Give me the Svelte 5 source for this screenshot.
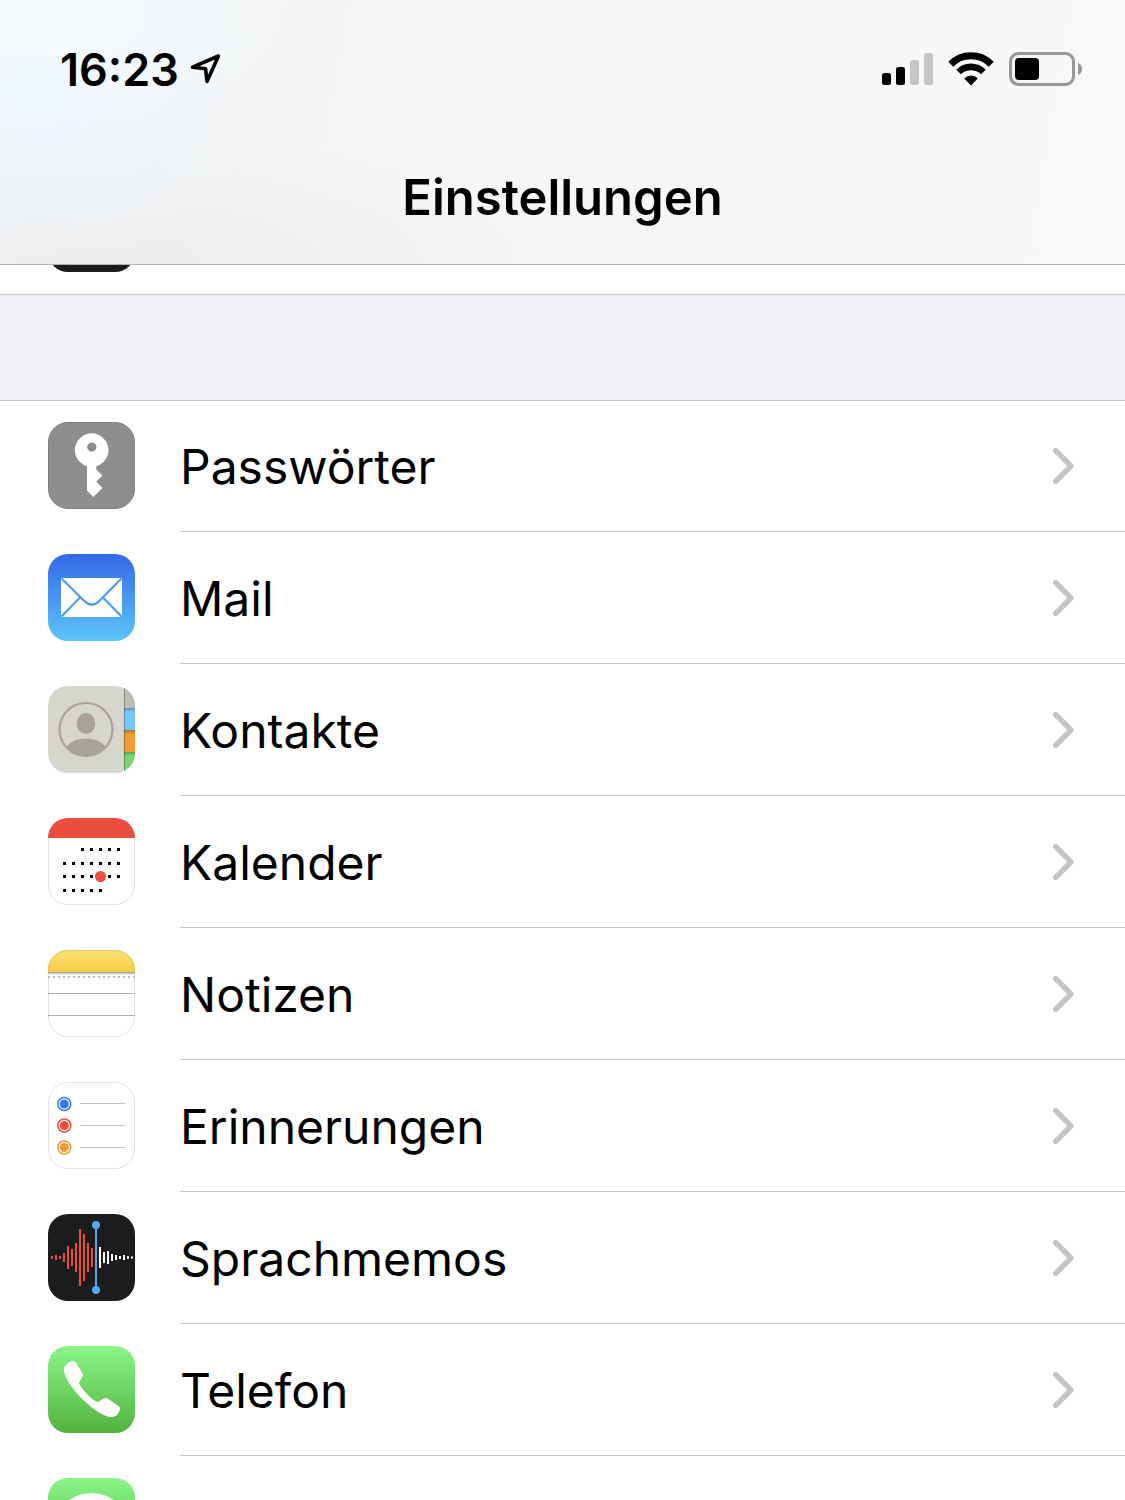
<script>
  const items = [
    { id: 'passwords', label: 'Passwörter' },
    { id: 'mail', label: 'Mail' },
    { id: 'contacts', label: 'Kontakte' },
    { id: 'calendar', label: 'Kalender' },
    { id: 'notes', label: 'Notizen' },
    { id: 'reminders', label: 'Erinnerungen' },
    { id: 'memos', label: 'Sprachmemos' },
    { id: 'phone', label: 'Telefon' },
    { id: 'messages', label: '', name: 'Nachrichten' }
  ];

  const calendarRows = [
    { y: 30, from: 2, to: 6 },
    { y: 44, from: 0, to: 6 },
    { y: 57, from: 0, to: 6 },
    { y: 71, from: 0, to: 4 }
  ];
  const calendarDots = calendarRows.flatMap((r) =>
    Array.from({ length: r.to - r.from + 1 }, (_, i) => ({ x: 15 + (r.from + i) * 9, y: r.y }))
  );

  const redBars = [1.3, 2.5, 1.5, 4.5, 11.5, 8.5, 14.5, 28.5, 23.5, 14.5, 9.5];
  const whiteBars = [10.5, 5.5, 6.5, 3.5, 2.5, 1.5, 2.5, 1.3, 1];

  const reminders = [
    { y: 22, color: '#3478f6' },
    { y: 43.5, color: '#eb4d3d' },
    { y: 65.5, color: '#f09a37' }
  ];
</script>

<div class="screen">
  <header class="header">
    <div class="status">
      <div class="clock">
        <span class="time">16:23</span>
        <svg width="32" height="32" viewBox="0 0 32 32" aria-hidden="true">
          <path d="M2.600 14.200 28.400 3 17 28.400 15.600 15.800Z" fill="none" stroke="#000" stroke-width="3.600" stroke-linejoin="round" />
        </svg>
      </div>
      <div class="indicators">
        <svg width="51" height="32" viewBox="0 0 51 32" aria-hidden="true">
          <rect x="0" y="20" width="9" height="12" rx="2.5" />
          <rect x="14" y="14" width="9" height="18" rx="2.5" />
          <rect x="28" y="7" width="9" height="25" rx="2.5" fill="#c5c5c5" />
          <rect x="42" y="0" width="9" height="32" rx="2.5" fill="#c5c5c5" />
        </svg>
        <svg width="46" height="34" viewBox="0 0 46 34" aria-hidden="true">
          <g fill="none" stroke="#000">
            <path d="M2.8 12.2A28.5 28.5 0 0 1 43.2 12.2" stroke-width="7" />
            <path d="M10.6 20A17.5 17.5 0 0 1 35.4 20" stroke-width="6.6" />
          </g>
          <path d="M16.2 26.4A9.6 9.6 0 0 1 29.8 26.4L23 33.4Z" />
        </svg>
        <svg width="73" height="34" viewBox="0 0 73 34" aria-hidden="true">
          <rect x="1.5" y="1.5" width="63" height="31" rx="8" fill="none" stroke="#979797" stroke-width="3" />
          <rect x="6" y="6" width="24" height="22" rx="4" />
          <path d="M69 11C71.6 12 73 14.300 73 17S71.600 22 69 23Z" fill="#979797" />
        </svg>
      </div>
    </div>
    <h1>Einstellungen</h1>
  </header>

  <main>
    <div class="tail">
      <svg class="icon" width="87" height="87" viewBox="0 0 87 87" aria-hidden="true">
        <rect width="87" height="87" rx="20" fill="#1c1b1d" />
      </svg>
    </div>
    <div class="spacer"></div>

    <ul class="list">
      {#each items as item (item.id)}
        <li>
          <a class="row" href={'#' + item.id} aria-label={item.name}>
            <svg class="icon" width="87" height="87" viewBox="0 0 87 87" aria-hidden="true">
              {#if item.id === 'passwords'}
                <rect x="0.5" y="0.5" width="86" height="86" rx="19.500" fill="#8e8e91" stroke="#7f7f82" />
                <path fill="#fff" fill-rule="evenodd" d="M39 44.300A16.800 16.800 0 1 1 48.300 44.300V47.600L54.500 53.600 48.300 59.500 54.500 66 45.200 75 39 68.500ZM43.800 20.400a4.600 4.600 0 1 0 .01 0Z" />
              {:else if item.id === 'mail'}
                <defs>
                  <linearGradient id="mail-fill" x1="0" y1="0" x2="0" y2="1">
                    <stop offset="0" stop-color="#3468e8" />
                    <stop offset="1" stop-color="#5cc5fa" />
                  </linearGradient>
                </defs>
                <rect width="87" height="87" rx="20" fill="url(#mail-fill)" />
                <rect x="13" y="24" width="61" height="39" rx="1" fill="#fff" />
                <g fill="none" stroke="#459bf3" stroke-width="2">
                  <path d="M13.500 24.500 36 46.800C41 51.800 46.500 51.800 51.500 46.800L73.500 24.500" />
                  <path d="M32 43.500 13.500 62.500M55 43.500 73.500 62.500" />
                </g>
              {:else if item.id === 'contacts'}
                <defs>
                  <clipPath id="contacts-shape"><rect width="87" height="87" rx="20" /></clipPath>
                  <clipPath id="contacts-disc"><circle cx="38" cy="43.500" r="26.500" /></clipPath>
                  <linearGradient id="tab-shade" x1="0" y1="0" x2="0" y2="1">
                    <stop offset="0" stop-color="#000" stop-opacity="0.25" />
                    <stop offset="1" stop-color="#000" stop-opacity="0" />
                  </linearGradient>
                </defs>
                <g clip-path="url(#contacts-shape)">
                  <rect width="87" height="87" fill="#d6d6cd" />
                  <rect x="76" width="11" height="22" fill="#bfbcb4" />
                  <rect x="76" y="22" width="11" height="22" fill="#78c5f8" />
                  <rect x="76" y="44" width="11" height="22" fill="#f19a38" />
                  <rect x="76" y="66" width="11" height="21" fill="#76d573" />
                  <rect x="76" y="22" width="11" height="4" fill="url(#tab-shade)" />
                  <rect x="76" y="44" width="11" height="4" fill="url(#tab-shade)" />
                  <rect x="76" y="66" width="11" height="4" fill="url(#tab-shade)" />
                  <rect x="76" width="1" height="87" fill="#000" opacity="0.3" />
                </g>
                <circle cx="38" cy="43.500" r="26.500" fill="none" stroke="#a9a29c" stroke-width="2.200" />
                <ellipse cx="38" cy="37.500" rx="9.300" ry="10.500" fill="#a9a29c" />
                <ellipse cx="38" cy="67" rx="21.500" ry="14.500" fill="#a9a29c" clip-path="url(#contacts-disc)" />
              {:else if item.id === 'calendar'}
                <rect x="0.5" y="0.5" width="86" height="86" rx="19.500" fill="#fff" stroke="#e2e2e2" />
                <path d="M0 20A20 20 0 0 1 20 0H67A20 20 0 0 1 87 20Z" fill="#ea4e3d" />
                {#each calendarDots as dot}
                  <rect x={dot.x} y={dot.y} width="3" height="3" />
                {/each}
                <circle cx="52.500" cy="58.500" r="5.500" fill="#ea4e3d" />
              {:else if item.id === 'notes'}
                <defs>
                  <linearGradient id="notes-fill" x1="0" y1="0" x2="0" y2="1">
                    <stop offset="0" stop-color="#fbe078" />
                    <stop offset="1" stop-color="#f6cc3f" />
                  </linearGradient>
                </defs>
                <rect x="0.5" y="0.5" width="86" height="86" rx="19.500" fill="#fff" stroke="#e2e2e2" />
                <path d="M0 22V20A20 20 0 0 1 20 0H67A20 20 0 0 1 87 20V22Z" fill="url(#notes-fill)" />
                <path d="M0.500 22V20A19.500 19.500 0 0 1 20 0.500H67A19.500 19.500 0 0 1 86.500 20V22" fill="none" stroke="#dfbd50" opacity="0.6" />
                <rect y="22" width="87" height="1" fill="#a5a19c" />
                <rect y="23" width="87" height="1" fill="#cfcdcf" />
                <rect y="24" width="87" height="1" fill="#ececee" />
                <path d="M0 27H87" stroke="#bdbdbf" stroke-width="2" stroke-dasharray="2 3" />
                <rect y="43" width="87" height="1" fill="#b0b0b0" />
                <rect y="65" width="87" height="1" fill="#b0b0b0" />
              {:else if item.id === 'reminders'}
                <rect x="0.5" y="0.5" width="86" height="86" rx="19.500" fill="#fff" stroke="#e2e2e2" />
                {#each reminders as r}
                  <circle cx="16.300" cy={r.y} r="6.500" fill="none" stroke={r.color} stroke-width="1.500" />
                  <circle cx="16.300" cy={r.y} r="4.500" fill={r.color} />
                {/each}
                <rect x="32" y="21" width="45" height="1" fill="#c4c4c4" />
                <rect x="32" y="43" width="45" height="1" fill="#c4c4c4" />
                <rect x="32" y="65" width="45" height="1" fill="#c4c4c4" />
              {:else if item.id === 'memos'}
                <rect width="87" height="87" rx="20" fill="#1c1c1c" />
                {#each redBars as h, i}
                  <rect x={3 + i * 4} y={43.5 - h} width="2" height={h * 2} fill="#eb4d3d" />
                {/each}
                {#each whiteBars as h, i}
                  <rect x={51 + i * 4} y={43.5 - h} width="2" height={h * 2} fill="#fff" />
                {/each}
                <rect x="47" y="11" width="2" height="65" fill="#50a9f5" />
                <circle cx="48" cy="11" r="4" fill="#50a9f5" />
                <circle cx="48" cy="76" r="4" fill="#50a9f5" />
              {:else if item.id === 'phone'}
                <defs>
                  <linearGradient id="phone-fill" x1="0" y1="0" x2="0" y2="1">
                    <stop offset="0" stop-color="#8bf588" />
                    <stop offset="1" stop-color="#52b33f" />
                  </linearGradient>
                </defs>
                <rect width="87" height="87" rx="20" fill="url(#phone-fill)" />
                <path fill="#fff" d="M16 23C16.500 19 20.500 16 25 15C26.300 14.800 27.200 15.500 28 16.700L34.600 27.500C35.400 28.900 35.200 29.700 34.300 31L31.500 35.500C30.800 36.700 31 37.500 31.600 38.600C35.500 45 41.500 51.500 47.600 55.300C48.800 56 49.800 55.900 51 55.200L55.600 52.500C57 51.700 58.300 51.700 59.600 52.500L70.800 60.200C72 61 72.200 62.300 71.800 63.500C70.800 68.500 67.500 71 63 71C57 71 46.500 64.500 37.500 56C25.500 44.800 15.500 31 16 23Z" />
              {:else}
                <defs>
                  <linearGradient id="messages-fill" x1="0" y1="0" x2="0" y2="1">
                    <stop offset="0" stop-color="#8bf588" />
                    <stop offset="1" stop-color="#52b33f" />
                  </linearGradient>
                </defs>
                <rect width="87" height="87" rx="20" fill="url(#messages-fill)" />
                <ellipse cx="43.500" cy="40.500" rx="32" ry="25.500" fill="#fff" />
                <path d="M27 60C27 66 24 70 20 72C27 72 33 69 36 64Z" fill="#fff" />
              {/if}
            </svg>
            <span class="body">
              <span class="label">{item.label}</span>
              <svg width="22" height="36" viewBox="0 0 22 36" aria-hidden="true">
                <path d="M2.700 2.700 18 18 2.700 33.300" fill="none" stroke="#c4c4c6" stroke-width="5.400" stroke-linecap="round" stroke-linejoin="round" />
              </svg>
            </span>
          </a>
        </li>
      {/each}
    </ul>
  </main>
</div>

<style>
  :global(body) {
    margin: 0;
    background: #fff;
  }

  .screen {
    display: flex;
    flex-direction: column;
    height: 100vh;
    overflow: hidden;
    font-family: Inter, 'Liberation Sans', sans-serif;
    color: #000;
  }

  svg {
    display: block;
    flex: none;
  }

  .header {
    flex: none;
    border-bottom: 1px solid #b2b2b2;
    background:
      radial-gradient(ellipse 280px 150px at 20px 0, #f5fcff 0%, #f5fcff00 100%),
      radial-gradient(ellipse 230px 190px at 40px 90px, #eef6fe 0%, #eef6fe00 100%),
      radial-gradient(ellipse 460px 130px at 90px 264px, #ececec 0%, #ececec00 100%),
      linear-gradient(100deg, #f3f4f4 0%, #f6f6f6 45%, #f8f8f8 100%);
  }

  .status {
    display: flex;
    align-items: center;
    justify-content: space-between;
    box-sizing: border-box;
    height: 132px;
    padding: 6px 43px 0 60px;
  }

  .clock {
    display: flex;
    align-items: center;
    gap: 11px;
  }

  .time {
    padding-top: 1px;
    font-size: 45px;
    font-weight: 600;
    line-height: 54px;
  }

  .indicators {
    display: flex;
    align-items: center;
    gap: 15px;
  }

  h1 {
    margin: 0;
    font-size: 49px;
    font-weight: 600;
    line-height: 132px;
    text-align: center;
  }

  main {
    flex: 1;
    min-height: 0;
    overflow: hidden;
  }

  .tail {
    display: flex;
    align-items: flex-end;
    box-sizing: border-box;
    height: 30px;
    padding: 0 48px 22px;
    border-bottom: 1px solid #c6c6c8;
    overflow: hidden;
  }

  .spacer {
    height: 105px;
    background: #f2f1f6;
  }

  .list {
    margin: 0;
    padding: 0;
    list-style: none;
    box-shadow: inset 0 1px #c6c6c8;
  }

  .row {
    display: flex;
    align-items: stretch;
    gap: 45px;
    padding-left: 48px;
    color: inherit;
    text-decoration: none;
  }

  .row .icon {
    margin: 22px 0 23px;
  }

  .body {
    display: flex;
    flex: 1;
    align-items: center;
    justify-content: space-between;
    padding-right: 50px;
    border-bottom: 1px solid #c6c6c8;
  }

  .label {
    padding-top: 2px;
    font-size: 48px;
    line-height: 60px;
  }
</style>
